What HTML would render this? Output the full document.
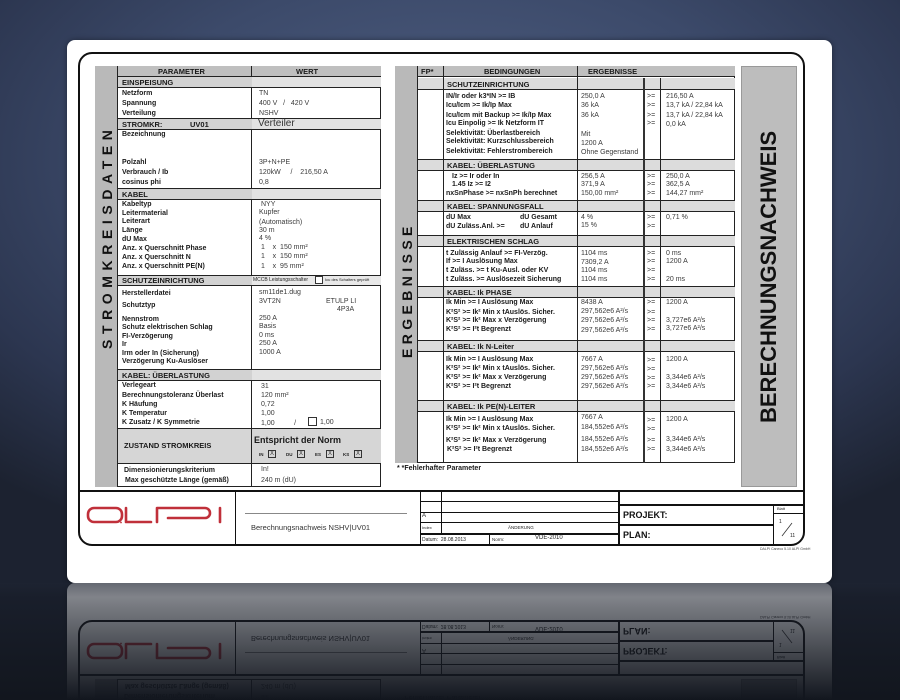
<!DOCTYPE html>
<html style="overflow:hidden"><head><meta charset="utf-8">
<style>
*{margin:0;padding:0;box-sizing:border-box}
body{width:900px;height:700px;overflow:hidden;position:relative;font-family:"Liberation Sans",Arial,sans-serif;
background:radial-gradient(ellipse 700px 420px at 450px 160px,#4f5f82 0%,#3c4a6a 45%,#2c3650 75%,#1c2230 100%);}
.a{position:absolute;white-space:nowrap}
.p{font:bold 7px "Liberation Sans",sans-serif;color:#1a1a1a}
.v{font:7px "Liberation Sans",sans-serif;color:#3a3a3a}
.h{font:bold 7.5px "Liberation Sans",sans-serif;color:#1a1a1a}
.r{position:absolute}
.bl{background:#111}
.box{position:absolute;width:8px;height:8px;border:1px solid #333;font:6px "Liberation Sans";text-align:center;line-height:6px;color:#333}
#card{position:absolute;left:0;top:0;width:900px;height:700px;overflow:hidden}
#refl{position:absolute;left:0;top:583px;width:900px;height:117px;overflow:hidden}
#refl .w{position:absolute;left:0;top:-583px;width:900px;height:700px;transform:scaleY(-1);transform-origin:50% 583px;opacity:.7}
#refl .f{position:absolute;left:0;top:0;width:900px;height:117px;background:linear-gradient(rgba(30,36,50,.55) 0%,rgba(20,24,34,.35) 12%,rgba(18,22,30,.7) 60%,#12161e 100%)}
</style></head><body>
<div id="card">
<div class="r" style="left:67px;top:40px;width:765px;height:543px;background:#fff;border-radius:8px;box-shadow:0 0 6px rgba(0,0,0,.4)"></div>
<div class="r" style="left:78px;top:52px;width:727px;height:494px;border:2px solid #111;border-radius:14px"></div>

<!-- LEFT TABLE -->
<div class="r" style="left:95px;top:66px;width:286px;height:421px;border:1px solid #222"></div>
<div class="r" style="left:95px;top:66px;width:23px;height:421px;background:#b9b9b9;border-right:1px solid #222"></div>
<div class="a" style="left:98px;top:66px;width:18px;height:342px;writing-mode:vertical-rl;transform:rotate(180deg);font:bold 14px 'Liberation Sans';letter-spacing:5.6px;color:#111;text-align:center;line-height:18px">STROMKREISDATEN</div>
<div class="r" style="left:118px;top:66px;width:263px;height:11px;background:#bfbfbf;border-bottom:1px solid #222"></div>
<div class="r" style="left:251px;top:66px;width:1px;height:421px;background:#222"></div>
<div class="a h" style="left:158px;top:67px">PARAMETER</div>
<div class="a h" style="left:296px;top:67px">WERT</div>
<div class="r" style="left:118px;top:77px;width:263px;height:11px;background:#d2d2d2;border-bottom:1px solid #222"></div>
<div class="r" style="left:252px;top:77px;width:129px;height:10px;background:#e2e2e2"></div>
<div class="a h" style="left:122px;top:78px">EINSPEISUNG</div>
<div class="a p" style="left:122px;top:90px">Netzform</div><div class="a v" style="left:259px;top:90px">TN</div>
<div class="a p" style="left:122px;top:100px">Spannung</div><div class="a v" style="left:259px;top:100px">400 V &nbsp;&nbsp;/ &nbsp;&nbsp;420 V</div>
<div class="a p" style="left:122px;top:110px">Verteilung</div><div class="a v" style="left:259px;top:110px">NSHV</div>
<div class="r" style="left:118px;top:118px;width:263px;height:12px;background:#d2d2d2;border-top:1px solid #222;border-bottom:1px solid #222"></div>
<div class="r" style="left:252px;top:119px;width:129px;height:10px;background:#e2e2e2"></div>
<div class="a h" style="left:122px;top:120px">STROMKR:</div><div class="a h" style="left:190px;top:120px">UV01</div>
<div class="a" style="left:258px;top:118px;font:10px 'Liberation Sans';color:#333">Verteiler</div>
<div class="a p" style="left:122px;top:131px">Bezeichnung</div>
<div class="a p" style="left:122px;top:159px">Polzahl</div><div class="a v" style="left:259px;top:159px">3P+N+PE</div>
<div class="a p" style="left:122px;top:169px">Verbrauch / Ib</div><div class="a v" style="left:259px;top:169px">120kW &nbsp;&nbsp;&nbsp;&nbsp;/ &nbsp;&nbsp;&nbsp;216,50 A</div>
<div class="a p" style="left:122px;top:179px">cosinus phi</div><div class="a v" style="left:259px;top:179px">0,8</div>
<div class="r" style="left:118px;top:188px;width:263px;height:12px;background:#d2d2d2;border-top:1px solid #222;border-bottom:1px solid #222"></div>
<div class="r" style="left:252px;top:189px;width:129px;height:10px;background:#e2e2e2"></div>
<div class="a h" style="left:122px;top:190px">KABEL</div>
<div class="a p" style="left:122px;top:201px">Kabeltyp</div><div class="a v" style="left:261px;top:201px">NYY</div>
<div class="a p" style="left:122px;top:210px">Leitermaterial</div><div class="a v" style="left:259px;top:209px">Kupfer</div>
<div class="a p" style="left:122px;top:218px">Leiterart</div><div class="a v" style="left:259px;top:219px">(Automatisch)</div>
<div class="a p" style="left:122px;top:227px">Länge</div><div class="a v" style="left:259px;top:227px">30 m</div>
<div class="a p" style="left:122px;top:236px">dU Max</div><div class="a v" style="left:259px;top:235px">4 %</div>
<div class="a p" style="left:122px;top:245px">Anz. x Querschnitt Phase</div><div class="a v" style="left:261px;top:244px">1 &nbsp;&nbsp;&nbsp;x &nbsp;150 mm²</div>
<div class="a p" style="left:122px;top:254px">Anz. x Querschnitt N</div><div class="a v" style="left:261px;top:253px">1 &nbsp;&nbsp;&nbsp;x &nbsp;150 mm²</div>
<div class="a p" style="left:122px;top:263px">Anz. x Querschnitt PE(N)</div><div class="a v" style="left:261px;top:263px">1 &nbsp;&nbsp;&nbsp;x &nbsp;95 mm²</div>
<div class="r" style="left:118px;top:275px;width:263px;height:11px;background:#d2d2d2;border-top:1px solid #222;border-bottom:1px solid #222"></div>
<div class="r" style="left:252px;top:276px;width:129px;height:9px;background:#e8e8e8"></div>
<div class="a h" style="left:122px;top:276px">SCHUTZEINRICHTUNG</div>
<div class="a" style="left:253px;top:277px;font:5px 'Liberation Sans';color:#222">MCCB Leistungsschalter</div>
<div class="r" style="left:315px;top:276px;width:8px;height:8px;border:1px solid #333;background:#fff"></div>
<div class="a" style="left:325px;top:277px;font:4px 'Liberation Sans';color:#222">Icu des Schalters geprüft</div>
<div class="a p" style="left:122px;top:290px">Herstellerdatei</div><div class="a v" style="left:259px;top:289px">sm11de1.dug</div>
<div class="a p" style="left:122px;top:302px">Schutztyp</div><div class="a v" style="left:259px;top:298px">3VT2N</div><div class="a v" style="left:326px;top:298px">ETULP LI</div><div class="a v" style="left:337px;top:306px">4P3A</div>
<div class="a p" style="left:122px;top:316px">Nennstrom</div><div class="a v" style="left:259px;top:315px">250 A</div>
<div class="a p" style="left:122px;top:324px">Schutz elektrischen Schlag</div><div class="a v" style="left:259px;top:323px">Basis</div>
<div class="a p" style="left:122px;top:333px">FI-Verzögerung</div><div class="a v" style="left:259px;top:332px">0 ms</div>
<div class="a p" style="left:122px;top:341px">Ir</div><div class="a v" style="left:259px;top:340px">250 A</div>
<div class="a p" style="left:122px;top:350px">Irm oder In (Sicherung)</div><div class="a v" style="left:259px;top:349px">1000 A</div>
<div class="a p" style="left:122px;top:358px">Verzögerung Ku-Auslöser</div>
<div class="r" style="left:118px;top:369px;width:263px;height:12px;background:#d2d2d2;border-top:1px solid #222;border-bottom:1px solid #222"></div>
<div class="r" style="left:252px;top:370px;width:129px;height:10px;background:#e2e2e2"></div>
<div class="a h" style="left:122px;top:371px">KABEL: ÜBERLASTUNG</div>
<div class="a p" style="left:122px;top:382px">Verlegeart</div><div class="a v" style="left:261px;top:383px">31</div>
<div class="a p" style="left:122px;top:392px">Berechnungstoleranz Überlast</div><div class="a v" style="left:261px;top:392px">120 mm²</div>
<div class="a p" style="left:122px;top:401px">K Häufung</div><div class="a v" style="left:261px;top:401px">0,72</div>
<div class="a p" style="left:122px;top:410px">K Temperatur</div><div class="a v" style="left:261px;top:410px">1,00</div>
<div class="a p" style="left:122px;top:419px">K Zusatz / K Symmetrie</div><div class="a v" style="left:261px;top:420px">1,00 &nbsp;&nbsp;&nbsp;&nbsp;&nbsp;&nbsp;&nbsp;&nbsp;&nbsp;/</div>
<div class="r" style="left:308px;top:417px;width:9px;height:9px;border:1px solid #333;background:#fff"></div><div class="a v" style="left:320px;top:419px">1,00</div>
<div class="r" style="left:118px;top:428px;width:263px;height:36px;background:#d6d6d6;border-top:1px solid #222;border-bottom:1px solid #222"></div>
<div class="r" style="left:251px;top:428px;width:1px;height:36px;background:#222"></div>
<div class="a" style="left:124px;top:441px;font:bold 7.5px 'Liberation Sans';color:#1a1a1a">ZUSTAND STROMKREIS</div>
<div class="a" style="left:254px;top:435px;font:bold 9px 'Liberation Sans';color:#1a1a1a">Entspricht der Norm</div>
<div class="a" style="left:259px;top:452px;font:bold 4.5px 'Liberation Sans';color:#222">IN</div><div class="box" style="left:268px;top:450px">X</div>
<div class="a" style="left:286px;top:452px;font:bold 4.5px 'Liberation Sans';color:#222">DU</div><div class="box" style="left:297px;top:450px">X</div>
<div class="a" style="left:315px;top:452px;font:bold 4.5px 'Liberation Sans';color:#222">ES</div><div class="box" style="left:326px;top:450px">X</div>
<div class="a" style="left:343px;top:452px;font:bold 4.5px 'Liberation Sans';color:#222">KS</div><div class="box" style="left:354px;top:450px">X</div>
<div class="a p" style="left:124px;top:467px">Dimensionierungskriterium</div><div class="a v" style="left:261px;top:466px">In!</div>
<div class="a p" style="left:125px;top:477px">Max geschützte Länge (gemäß)</div><div class="a v" style="left:261px;top:477px">240 m (dU)</div>

<!-- MIDDLE TABLE -->
<div class="r" style="left:395px;top:66px;width:340px;height:397px;border:1px solid #222"></div>
<div class="r" style="left:395px;top:66px;width:23px;height:397px;background:#b9b9b9;border-right:1px solid #222"></div>
<div class="a" style="left:398px;top:110px;width:18px;height:360px;writing-mode:vertical-rl;transform:rotate(180deg);font:bold 14px 'Liberation Sans';letter-spacing:4.4px;color:#111;text-align:center;line-height:18px">ERGEBNISSE</div>
<div class="r" style="left:418px;top:66px;width:317px;height:11px;background:#bfbfbf;border-bottom:1px solid #222"></div>
<div class="a h" style="left:421px;top:67px">FP*</div>
<div class="a h" style="left:484px;top:67px">BEDINGUNGEN</div>
<div class="a h" style="left:588px;top:67px">ERGEBNISSE</div>
<div class="r" style="left:418px;top:78px;width:317px;height:12px;background:#dcdcdc;border-bottom:1px solid #222"></div>
<div class="r" style="left:418px;top:159px;width:317px;height:12px;background:#dcdcdc;border-top:1px solid #222;border-bottom:1px solid #222"></div>
<div class="r" style="left:418px;top:200px;width:317px;height:12px;background:#dcdcdc;border-top:1px solid #222;border-bottom:1px solid #222"></div>
<div class="r" style="left:418px;top:235px;width:317px;height:12px;background:#dcdcdc;border-top:1px solid #222;border-bottom:1px solid #222"></div>
<div class="r" style="left:418px;top:286px;width:317px;height:12px;background:#dcdcdc;border-top:1px solid #222;border-bottom:1px solid #222"></div>
<div class="r" style="left:418px;top:340px;width:317px;height:12px;background:#dcdcdc;border-top:1px solid #222;border-bottom:1px solid #222"></div>
<div class="r" style="left:418px;top:400px;width:317px;height:12px;background:#dcdcdc;border-top:1px solid #222;border-bottom:1px solid #222"></div>
<div class="r" style="left:443px;top:66px;width:1px;height:397px;background:#222"></div>
<div class="r" style="left:577px;top:66px;width:1px;height:397px;background:#222"></div>
<div class="r" style="left:643px;top:78px;width:2px;height:385px;background:#333"></div>
<div class="r" style="left:660px;top:78px;width:1px;height:385px;background:#222"></div>
<div class="a h" style="left:447px;top:80px">SCHUTZEINRICHTUNG</div>
<div class="a h" style="left:447px;top:161px">KABEL: ÜBERLASTUNG</div>
<div class="a h" style="left:447px;top:202px">KABEL: SPANNUNGSFALL</div>
<div class="a h" style="left:447px;top:237px">ELEKTRISCHEN SCHLAG</div>
<div class="a h" style="left:447px;top:288px">KABEL: Ik PHASE</div>
<div class="a h" style="left:447px;top:342px">KABEL: Ik N-Leiter</div>
<div class="a h" style="left:447px;top:402px">KABEL: Ik PE(N)-LEITER</div>

<div class="a p" style="left:446px;top:93px">IN/Ir oder k3*IN &gt;= IB</div><div class="a v" style="left:581px;top:93px">250,0 A</div><div class="a v" style="left:647px;top:93px">&gt;=</div><div class="a v" style="left:666px;top:93px">216,50 A</div>
<div class="a p" style="left:446px;top:102px">Icu/Icm &gt;= Ik/Ip Max</div><div class="a v" style="left:581px;top:102px">36 kA</div><div class="a v" style="left:647px;top:102px">&gt;=</div><div class="a v" style="left:666px;top:102px">13,7 kA / 22,84 kA</div>
<div class="a p" style="left:446px;top:112px">Icu/Icm mit Backup &gt;= Ik/Ip Max</div><div class="a v" style="left:581px;top:112px">36 kA</div><div class="a v" style="left:647px;top:112px">&gt;=</div><div class="a v" style="left:666px;top:112px">13,7 kA / 22,84 kA</div>
<div class="a p" style="left:446px;top:120px">Icu Einpolig &gt;= Ik Netzform IT</div><div class="a v" style="left:647px;top:120px">&gt;=</div><div class="a v" style="left:666px;top:121px">0,0 kA</div>
<div class="a p" style="left:446px;top:130px">Selektivität: Überlastbereich</div><div class="a v" style="left:581px;top:131px">Mit</div>
<div class="a p" style="left:446px;top:138px">Selektivität: Kurzschlussbereich</div><div class="a v" style="left:581px;top:140px">1200 A</div>
<div class="a p" style="left:446px;top:148px">Selektivität: Fehlerstrombereich</div><div class="a v" style="left:581px;top:149px">Ohne Gegenstand</div>

<div class="a p" style="left:452px;top:173px">Iz &gt;= Ir oder In</div><div class="a v" style="left:581px;top:173px">256,5 A</div><div class="a v" style="left:647px;top:173px">&gt;=</div><div class="a v" style="left:666px;top:173px">250,0 A</div>
<div class="a p" style="left:452px;top:181px">1.45 Iz &gt;= I2</div><div class="a v" style="left:581px;top:181px">371,9 A</div><div class="a v" style="left:647px;top:181px">&gt;=</div><div class="a v" style="left:666px;top:181px">362,5 A</div>
<div class="a p" style="left:446px;top:190px">nxSnPhase &gt;= nxSnPh berechnet</div><div class="a v" style="left:581px;top:190px">150,00 mm²</div><div class="a v" style="left:647px;top:190px">&gt;=</div><div class="a v" style="left:666px;top:190px">144,27 mm²</div>

<div class="a p" style="left:446px;top:214px">dU Max</div><div class="a p" style="left:520px;top:214px">dU Gesamt</div><div class="a v" style="left:581px;top:214px">4 %</div><div class="a v" style="left:647px;top:214px">&gt;=</div><div class="a v" style="left:666px;top:214px">0,71 %</div>
<div class="a p" style="left:446px;top:223px">dU Zuläss.Anl. &gt;=</div><div class="a p" style="left:520px;top:223px">dU Anlauf</div><div class="a v" style="left:581px;top:222px">15 %</div><div class="a v" style="left:647px;top:223px">&gt;=</div>

<div class="a p" style="left:446px;top:250px">t Zulässig Anlauf &gt;= FI-Verzög.</div><div class="a v" style="left:581px;top:250px">1104 ms</div><div class="a v" style="left:647px;top:250px">&gt;=</div><div class="a v" style="left:666px;top:250px">0 ms</div>
<div class="a p" style="left:446px;top:258px">If &gt;= I Auslösung Max</div><div class="a v" style="left:581px;top:259px">7309,2 A</div><div class="a v" style="left:647px;top:258px">&gt;=</div><div class="a v" style="left:666px;top:258px">1200 A</div>
<div class="a p" style="left:446px;top:267px">t Zuläss. &gt;= t Ku-Ausl. oder KV</div><div class="a v" style="left:581px;top:267px">1104 ms</div><div class="a v" style="left:647px;top:267px">&gt;=</div>
<div class="a p" style="left:446px;top:276px">t Zuläss. &gt;= Auslösezeit Sicherung</div><div class="a v" style="left:581px;top:276px">1104 ms</div><div class="a v" style="left:647px;top:276px">&gt;=</div><div class="a v" style="left:666px;top:276px">20 ms</div>

<div class="a p" style="left:446px;top:299px">Ik Min &gt;= I Auslösung Max</div><div class="a v" style="left:581px;top:299px">8438 A</div><div class="a v" style="left:647px;top:299px">&gt;=</div><div class="a v" style="left:666px;top:299px">1200 A</div>
<div class="a p" style="left:446px;top:309px">K²S² &gt;= Ik² Min x tAuslös. Sicher.</div><div class="a v" style="left:581px;top:308px">297,562e6 A²/s</div><div class="a v" style="left:647px;top:309px">&gt;=</div>
<div class="a p" style="left:446px;top:317px">K²S² &gt;= Ik² Max x Verzögerung</div><div class="a v" style="left:581px;top:317px">297,562e6 A²/s</div><div class="a v" style="left:647px;top:317px">&gt;=</div><div class="a v" style="left:666px;top:317px">3,727e6 A²/s</div>
<div class="a p" style="left:446px;top:326px">K²S² &gt;= I²t Begrenzt</div><div class="a v" style="left:581px;top:327px">297,562e6 A²/s</div><div class="a v" style="left:647px;top:326px">&gt;=</div><div class="a v" style="left:666px;top:325px">3,727e6 A²/s</div>

<div class="a p" style="left:446px;top:356px">Ik Min &gt;= I Auslösung Max</div><div class="a v" style="left:581px;top:356px">7667 A</div><div class="a v" style="left:647px;top:357px">&gt;=</div><div class="a v" style="left:666px;top:356px">1200 A</div>
<div class="a p" style="left:446px;top:365px">K²S² &gt;= Ik² Min x tAuslös. Sicher.</div><div class="a v" style="left:581px;top:365px">297,562e6 A²/s</div><div class="a v" style="left:647px;top:366px">&gt;=</div>
<div class="a p" style="left:446px;top:374px">K²S² &gt;= Ik² Max x Verzögerung</div><div class="a v" style="left:581px;top:374px">297,562e6 A²/s</div><div class="a v" style="left:647px;top:375px">&gt;=</div><div class="a v" style="left:666px;top:374px">3,344e6 A²/s</div>
<div class="a p" style="left:446px;top:383px">K²S² &gt;= I²t Begrenzt</div><div class="a v" style="left:581px;top:383px">297,562e6 A²/s</div><div class="a v" style="left:647px;top:383px">&gt;=</div><div class="a v" style="left:666px;top:383px">3,344e6 A²/s</div>

<div class="a p" style="left:446px;top:416px">Ik Min &gt;= I Auslösung Max</div><div class="a v" style="left:581px;top:414px">7667 A</div><div class="a v" style="left:647px;top:417px">&gt;=</div><div class="a v" style="left:666px;top:416px">1200 A</div>
<div class="a p" style="left:446px;top:425px">K²S² &gt;= Ik² Min x tAuslös. Sicher.</div><div class="a v" style="left:581px;top:424px">184,552e6 A²/s</div><div class="a v" style="left:647px;top:426px">&gt;=</div>
<div class="a p" style="left:446px;top:437px">K²S² &gt;= Ik² Max x Verzögerung</div><div class="a v" style="left:581px;top:436px">184,552e6 A²/s</div><div class="a v" style="left:647px;top:437px">&gt;=</div><div class="a v" style="left:666px;top:436px">3,344e6 A²/s</div>
<div class="a p" style="left:447px;top:446px">K²S² &gt;= I²t Begrenzt</div><div class="a v" style="left:581px;top:446px">184,552e6 A²/s</div><div class="a v" style="left:647px;top:446px">&gt;=</div><div class="a v" style="left:666px;top:446px">3,344e6 A²/s</div>
<div class="a p" style="left:397px;top:465px">* *Fehlerhafter Parameter</div>

<!-- RIGHT BAND -->
<div class="r" style="left:741px;top:66px;width:56px;height:421px;background:#bdbdbd;border:1px solid #999"></div>
<div class="a" style="left:741px;top:66px;width:56px;height:421px;writing-mode:vertical-rl;transform:rotate(180deg);font:bold 22px 'Liberation Sans';color:#111;text-align:center;line-height:56px">BERECHNUNGSNACHWEIS</div>

<!-- FOOTER -->
<div class="r bl" style="left:79px;top:490px;width:725px;height:2px"></div>
<div class="r bl" style="left:235px;top:491px;width:1px;height:54px"></div>
<div class="r bl" style="left:420px;top:491px;width:1px;height:54px"></div>
<div class="r bl" style="left:618px;top:491px;width:2px;height:54px"></div>
<div class="r bl" style="left:441px;top:491px;width:1px;height:42px"></div>
<div class="r bl" style="left:420px;top:501px;width:198px;height:1px"></div>
<div class="r bl" style="left:420px;top:512px;width:198px;height:1px"></div>
<div class="r bl" style="left:420px;top:522px;width:198px;height:1px"></div>
<div class="r bl" style="left:420px;top:533px;width:198px;height:2px"></div>
<div class="r bl" style="left:489px;top:533px;width:1px;height:12px"></div>
<div class="a" style="left:422px;top:513px;font:6px 'Liberation Sans';color:#222">A</div>
<div class="a" style="left:422px;top:525px;font:4px 'Liberation Sans';color:#222">Index</div>
<div class="a" style="left:508px;top:525px;font:4.5px 'Liberation Sans';color:#222">ÄNDERUNG</div>
<div class="a" style="left:422px;top:537px;font:5px 'Liberation Sans';color:#222">Datum: &nbsp;28.08.2013</div>
<div class="a" style="left:492px;top:537px;font:4.5px 'Liberation Sans';color:#222">Norm:</div>
<div class="a" style="left:535px;top:535px;font:6px 'Liberation Sans';color:#222">VDE-2010</div>
<div class="r bl" style="left:619px;top:504px;width:185px;height:2px"></div>
<div class="r bl" style="left:619px;top:524px;width:154px;height:2px"></div>
<div class="r bl" style="left:773px;top:504px;width:1px;height:41px"></div>
<div class="r bl" style="left:773px;top:513px;width:31px;height:1px"></div>
<div class="a" style="left:623px;top:510px;font:bold 9px 'Liberation Sans';color:#111">PROJEKT:</div>
<div class="a" style="left:623px;top:530px;font:bold 9px 'Liberation Sans';color:#111">PLAN:</div>
<div class="a" style="left:777px;top:506px;font:4px 'Liberation Sans';color:#222">Blatt</div>
<div class="a" style="left:779px;top:519px;font:5px 'Liberation Sans';color:#222">1</div>
<div class="a" style="left:790px;top:533px;font:5px 'Liberation Sans';color:#222">11</div>
<svg class="r" style="left:780px;top:520px" width="14" height="18"><line x1="2" y1="16" x2="12" y2="3" stroke="#333" stroke-width="0.8"/></svg>
<div class="r" style="left:245px;top:513px;width:162px;height:1px;background:#888"></div>
<div class="a" style="left:251px;top:523px;font:7.5px 'Liberation Sans';color:#333">Berechnungsnachweis NSHV|UV01</div>
<svg class="r" style="left:80px;top:500px" width="155" height="30" viewBox="0 0 155 30">
<g fill="none" stroke="#c0303a" stroke-width="2.6" stroke-linecap="round" stroke-linejoin="round">
<path d="M14 8 H36 a6 6 0 0 1 6 6 V16 a6 6 0 0 1 -6 6 H14 a6 6 0 0 1 -6 -6 V14 a6 6 0 0 1 6 -6 Z"/>
<path d="M46 8 V22 H71"/>
<path d="M77 22 V8 H125 a5 5 0 0 1 0 10 H88"/>
<path d="M140 8 V22"/>
</g><circle cx="41" cy="22.5" r="0.9" fill="#c0303a"/></svg>
<div class="a" style="left:760px;top:547px;font:3.5px 'Liberation Sans';color:#444">DALPI Caneco 5.10 ALPI GmbH</div>
</div>
<div id="refl"><div class="w"></div><div class="f"></div></div>
<script>
var c=document.getElementById('card').cloneNode(true);c.removeAttribute('id');
c.style.cssText='position:absolute;left:0;top:0;width:900px;height:700px;overflow:hidden';
document.querySelector('#refl .w').appendChild(c);
</script>
</body></html>
